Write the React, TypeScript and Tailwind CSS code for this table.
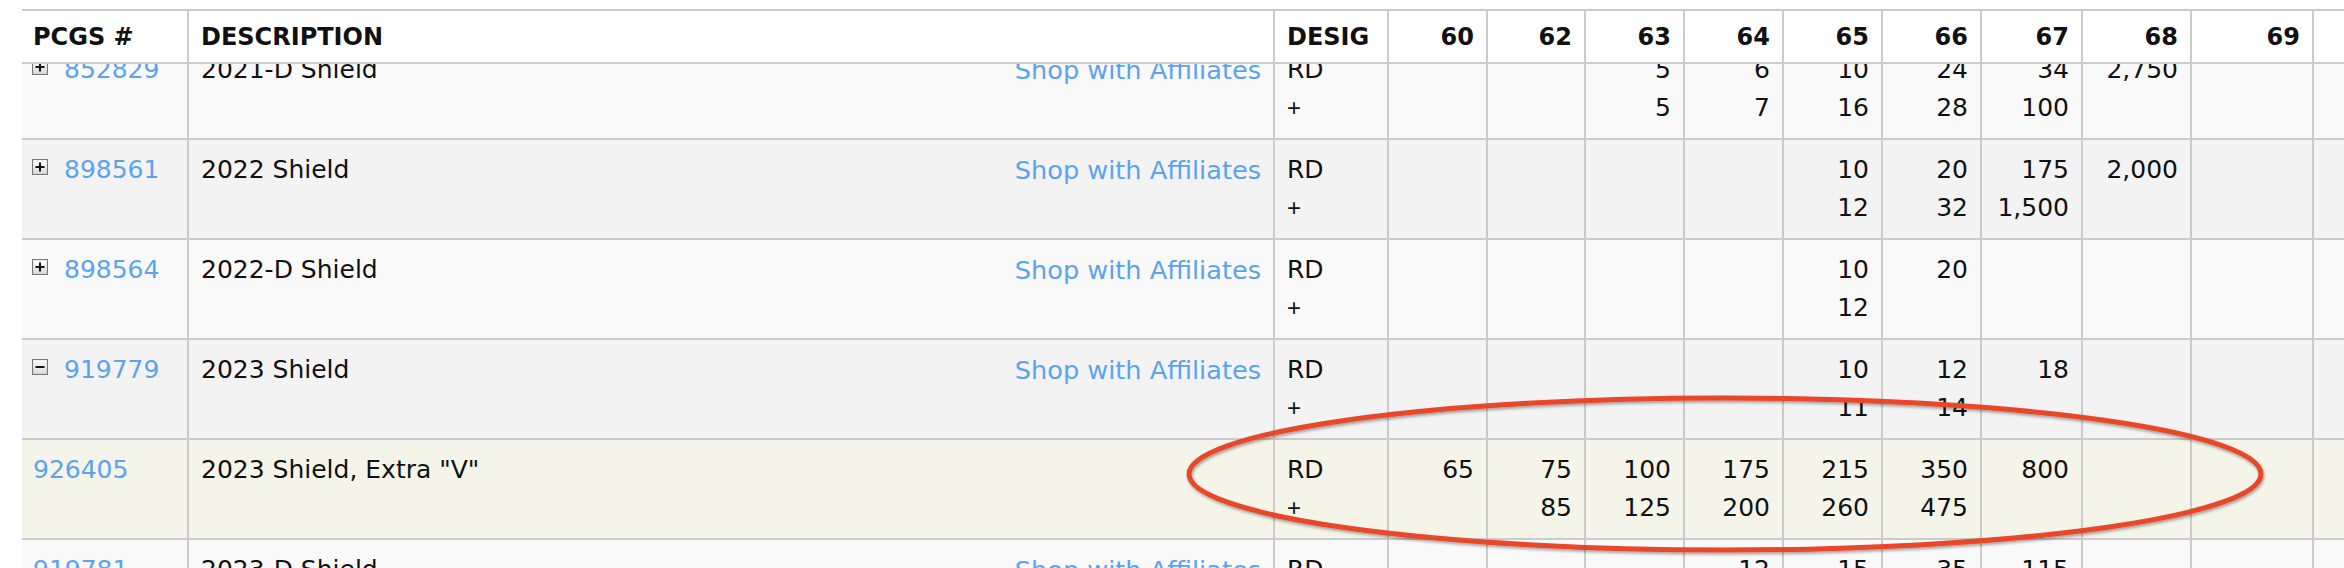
import React from "react";

const COLS =
  "grid grid-cols-[167px_1086px_114px_99px_98px_99px_99px_99px_99px_101px_109px_122px_200px] w-max";

type Row = {
  id: string;
  icon: "plus" | "minus" | null;
  desc: string;
  shop: boolean;
  bg: string;
  vals: [string, string][];
};

const E: [string, string] = ["", ""];

const rows: Row[] = [
  {
    id: "852829",
    icon: "plus",
    desc: "2021-D Shield",
    shop: true,
    bg: "bg-[#f9f9f9]",
    vals: [E, E, ["5", "5"], ["6", "7"], ["10", "16"], ["24", "28"], ["34", "100"], ["2,750", ""], E, E],
  },
  {
    id: "898561",
    icon: "plus",
    desc: "2022 Shield",
    shop: true,
    bg: "bg-[#f3f3f3]",
    vals: [E, E, E, E, ["10", "12"], ["20", "32"], ["175", "1,500"], ["2,000", ""], E, E],
  },
  {
    id: "898564",
    icon: "plus",
    desc: "2022-D Shield",
    shop: true,
    bg: "bg-[#f9f9f9]",
    vals: [E, E, E, E, ["10", "12"], ["20", ""], E, E, E, E],
  },
  {
    id: "919779",
    icon: "minus",
    desc: "2023 Shield",
    shop: true,
    bg: "bg-[#f3f3f3]",
    vals: [E, E, E, E, ["10", "11"], ["12", "14"], ["18", ""], E, E, E],
  },
  {
    id: "926405",
    icon: null,
    desc: '2023 Shield, Extra "V"',
    shop: false,
    bg: "bg-[#f5f4e8]",
    vals: [["65", ""], ["75", "85"], ["100", "125"], ["175", "200"], ["215", "260"], ["350", "475"], ["800", ""], E, E, E],
  },
  {
    id: "919781",
    icon: null,
    desc: "2023-D Shield",
    shop: true,
    bg: "bg-[#f9f9f9]",
    vals: [E, E, E, ["12", ""], ["15", ""], ["35", ""], ["115", ""], E, E, E],
  },
];

const headers = ["60", "62", "63", "64", "65", "66", "67", "68", "69", ""];

function ToggleIcon({ kind }: { kind: "plus" | "minus" }) {
  return (
    <svg width="16" height="16" viewBox="0 0 16 16" className="mt-[8px] mr-[16px] shrink-0">
      <defs>
        <linearGradient id={`g-${kind}`} x1="0" y1="0" x2="0" y2="1">
          <stop offset="0" stopColor="#ffffff" />
          <stop offset="1" stopColor="#d8d8d8" />
        </linearGradient>
      </defs>
      <rect x="0.5" y="0.5" width="15" height="15" fill={`url(#g-${kind})`} stroke="#7a7a7a" strokeWidth="1.2" />
      <rect x="3.5" y="7" width="9" height="2" fill="#111" />
      {kind === "plus" && <rect x="7" y="3.5" width="2" height="9" fill="#111" />}
    </svg>
  );
}

const cellBorder = "border-r-2 border-b-2 border-[#cbcbcb]";

export default function App() {
  return (
    <div className="relative w-[2344px] h-[568px] overflow-hidden bg-white font-['DejaVu_Sans',sans-serif] text-[#111111]">
      <div className="pl-[22px] pt-[9px]">
        {/* Header */}
        <div className={`${COLS} border-t-2 border-[#cbcbcb] bg-white`}>
          <div className={`${cellBorder} h-[53px] flex items-center pl-[11px] text-[24px] font-bold`}>PCGS #</div>
          <div className={`${cellBorder} h-[53px] flex items-center pl-[12px] text-[24px] font-bold`}>DESCRIPTION</div>
          <div className={`${cellBorder} h-[53px] flex items-center pl-[12px] text-[24px] font-bold`}>DESIG</div>
          {headers.map((h, i) => (
            <div
              key={i}
              className={`${cellBorder} h-[53px] flex items-center justify-end pr-[12px] text-[24px] font-bold`}
            >
              {h}
            </div>
          ))}
        </div>
        {/* Body */}
        <div className="h-[504px] overflow-hidden">
          <div className="-mt-[24px]">
            {rows.map((r) => (
              <div key={r.id} className={`${COLS} ${r.bg} text-[25px] leading-[38px]`}>
                <div className={`${cellBorder} h-[100px] flex items-start pl-[10px] pt-[11px]`}>
                  {r.icon && <ToggleIcon kind={r.icon} />}
                  <span className={`text-[#5ba3ef] ${r.icon ? "" : "pl-[1px]"}`}>{r.id}</span>
                </div>
                <div className={`${cellBorder} h-[100px] flex items-start justify-between px-[12px] pt-[11px]`}>
                  <span>{r.desc}</span>
                  {r.shop && <span className="text-[#5ba3ef] text-[25.6px]">Shop with Affiliates</span>}
                </div>
                <div className={`${cellBorder} h-[100px] flex flex-col pl-[12px] pt-[11px]`}>
                  <span>RD</span>
                  <span className="font-['Liberation_Sans',sans-serif] text-[24px] leading-[38px]">+</span>
                </div>
                {r.vals.map((v, i) => (
                  <div key={i} className={`${cellBorder} h-[100px] flex flex-col items-end pr-[12px] pt-[11px]`}>
                    <span className="h-[38px]">{v[0]}</span>
                    <span className="h-[38px]">{v[1]}</span>
                  </div>
                ))}
              </div>
            ))}
          </div>
        </div>
      </div>
      {/* Annotation ellipse */}
      <svg
        className="absolute left-0 top-0 pointer-events-none"
        width="2344"
        height="568"
        viewBox="0 0 2344 568"
      >
        <defs>
          <filter id="shadow" x="-5%" y="-30%" width="110%" height="160%">
            <feDropShadow dx="1" dy="2" stdDeviation="1.5" floodColor="#000" floodOpacity="0.35" />
          </filter>
        </defs>
        <ellipse
          cx="1725"
          cy="474"
          rx="536"
          ry="76"
          fill="none"
          stroke="#e8462b"
          strokeWidth="5"
          filter="url(#shadow)"
        />
      </svg>
    </div>
  );
}
